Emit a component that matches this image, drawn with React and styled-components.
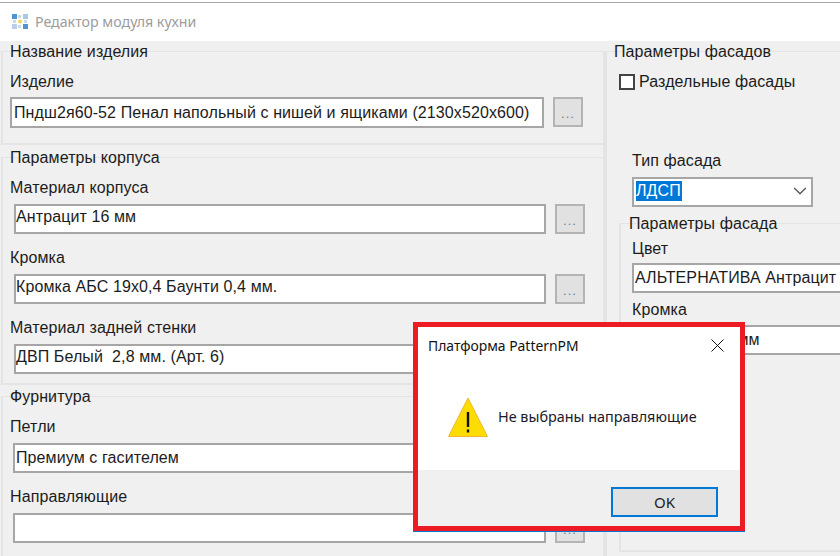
import React from 'react';
import styled, { createGlobalStyle } from 'styled-components';
import { ChevronDown } from 'lucide-react';

const GlobalStyle = createGlobalStyle`
  html, body {
    margin: 0;
    padding: 0;
    width: 840px;
    height: 556px;
    overflow: hidden;
    background: #ffffff;
  }
`;

const Window = styled.div`
  position: relative;
  width: 840px;
  height: 556px;
  overflow: hidden;
  display: flex;
  flex-direction: column;
  font-family: "Liberation Sans", Arial, sans-serif;
  font-size: 16px;
  letter-spacing: 0.1px;
  color: #1c1c1c;
`;

const TitleBar = styled.div`
  flex: none;
  height: 36px;
  margin-top: 2px;
  border-top: 1px solid #a9a9a9;
  padding: 0 0 2px 12px;
  display: flex;
  align-items: center;
  gap: 7px;
  background: #ffffff;
`;

const TitleText = styled.span`
  font-family: "Noto Sans", "Open Sans", sans-serif;
  font-size: 14.2px;
  letter-spacing: 0;
  color: #9c9c9c;
`;

const Body = styled.div`
  flex: 1;
  display: flex;
  min-height: 0;
  background: #f0f0f0;
`;

const LeftColumn = styled.div`
  flex: none;
  width: 603px;
  padding: 10px 0 0 1px;
  box-sizing: border-box;
  display: flex;
  flex-direction: column;
`;

const Divider = styled.div`
  flex: none;
  width: 2px;
  background: #e4e4e4;
  margin-top: 10px;
`;

const RightColumn = styled.div`
  flex: 1;
  min-width: 0;
  padding-top: 10px;
  display: flex;
  flex-direction: column;
`;

const Group = styled.div`
  box-sizing: border-box;
  flex: none;
  height: ${props => props.$height}px;
  margin-bottom: ${props => props.$gap || 0}px;
  border: 2px solid #e4e4e4;
  border-width: 1px 0 2px 2px;
  border-bottom-width: ${props => (props.$open ? 0 : 2)}px;
`;

const Legend = styled.div`
  height: 18px;
  line-height: 18px;
  margin-top: -9px;
  margin-left: ${props => props.$left}px;
  white-space: nowrap;
`;

const Fields = styled.div`
  padding-top: 12px;
  padding-left: ${props => props.$left}px;
  display: flex;
  flex-direction: column;
  gap: 15px;
`;

const Field = styled.div`
  display: flex;
  flex-direction: column;
  gap: ${props => props.$gap || 7}px;
`;

const Label = styled.div`
  height: 18px;
  line-height: 18px;
  white-space: nowrap;
`;

const Row = styled.div`
  display: flex;
  gap: 9px;
  padding-left: ${props => props.$indent || 0}px;
`;

const TextBox = styled.div`
  box-sizing: border-box;
  flex: none;
  width: ${props => props.$width}px;
  height: ${props => props.$height || 30}px;
  border: 2px solid #a6a6a6;
  background: #ffffff;
  padding-left: ${props => props.$pad ?? 1}px;
  line-height: ${props => props.$line || 25}px;
  white-space: nowrap;
  overflow: hidden;
`;

const DotsButton = styled.div`
  box-sizing: border-box;
  flex: none;
  width: 30px;
  height: 30px;
  border: 2px solid #b4b4b4;
  background: #e1e1e1;
  color: #7a7a7a;
  font-size: 13px;
  letter-spacing: 1px;
  text-align: center;
  line-height: 30px;
`;

const CheckRow = styled.div`
  display: flex;
  align-items: center;
  gap: 4px;
  margin: 12px 0 0 12px;
  height: 18px;
`;

const CheckBox = styled.div`
  box-sizing: border-box;
  width: 16px;
  height: 16px;
  border: 2px solid #444444;
  background: #ffffff;
`;

const TypeField = styled(Field)`
  margin: 61px 0 0 25px;
`;

const SelectBox = styled.div`
  box-sizing: border-box;
  width: 181px;
  height: 30px;
  padding: 0 0 2px 2px;
  border: 2px solid #a6a6a6;
  background: #ffffff;
  display: flex;
  align-items: center;
  justify-content: space-between;
`;

const SelectedText = styled.span`
  background: #0078d7;
  color: #ffffff;
  height: 20px;
  line-height: 20px;
  padding-right: 1px;
`;

const InnerGroup = styled.div`
  box-sizing: border-box;
  margin: 16px 0 0 12px;
  height: 329px;
  border: 2px solid #e4e4e4;
  border-width: 1px 0 2px 2px;
`;

const InnerField = styled(Field)`
  padding: ${props => props.$top}px 0 0 11px;
`;

const Dialog = styled.div`
  position: absolute;
  left: 413px;
  top: 322px;
  width: 332px;
  height: 209px;
  box-sizing: border-box;
  border: 5px solid #ed1c24;
  box-shadow: 0 1px 0 #0078d7;
  background: #ffffff;
  display: flex;
  flex-direction: column;
  font-family: "Noto Sans", "Open Sans", sans-serif;
  letter-spacing: 0;
  color: #111111;
`;

const DialogHeader = styled.div`
  flex: none;
  height: 36px;
  padding: 0 16px 0 10px;
  display: flex;
  align-items: center;
  justify-content: space-between;
  font-size: 13.9px;
`;

const DialogContent = styled.div`
  flex: 1;
  padding-left: 30px;
  display: flex;
  align-items: center;
  gap: 10px;
  font-size: 14.4px;
  color: #1a1a2a;
`;

const DialogFooter = styled.div`
  flex: none;
  height: 56px;
  box-sizing: border-box;
  padding: 17px 22px 0 0;
  background: #f0f0f0;
  display: flex;
  justify-content: flex-end;
  align-items: flex-start;
`;

const OkButton = styled.div`
  box-sizing: border-box;
  width: 107px;
  height: 30px;
  border: 2px solid #0078d7;
  background: #e1e1e1;
  color: #222222;
  font-size: 15px;
  text-align: center;
  line-height: 26px;
`;

const AppIcon = () => (
  <svg width="16" height="16" viewBox="0 0 16 16">
    <rect x="0" y="1" width="5" height="5" fill="#4f93cf" />
    <rect x="11" y="1" width="5" height="5" fill="#a9c8e4" />
    <rect x="0" y="11" width="5" height="5" fill="#b5d0e8" />
    <rect x="11" y="11" width="5" height="5" fill="#4f93cf" />
    <rect x="6" y="2" width="3" height="3" fill="#c9d9e6" />
    <rect x="1" y="7" width="3" height="3" fill="#c9d9e6" />
    <rect x="12" y="7" width="3" height="3" fill="#c9d9e6" />
    <rect x="6" y="12" width="3" height="3" fill="#c9d9e6" />
    <circle cx="8" cy="8.5" r="2" fill="#f2d64b" />
  </svg>
);

const WarningIcon = () => (
  <svg width="40" height="40" viewBox="0 0 40 40">
    <path d="M20 1 L39.5 39.5 L0.5 39.5 Z" fill="#fddc00" stroke="#f2b632" strokeWidth="1" strokeLinejoin="round" />
    <rect x="18.8" y="15" width="2.4" height="15" fill="#111111" />
    <rect x="18.8" y="32.5" width="2.4" height="3" fill="#111111" />
  </svg>
);

const CloseIcon = () => (
  <svg width="13" height="13" viewBox="0 0 13 13">
    <path d="M0.5 0.5 L12.5 12.5 M12.5 0.5 L0.5 12.5" stroke="#111111" strokeWidth="1" fill="none" />
  </svg>
);

const App = () => (
  <Window>
    <GlobalStyle />
    <TitleBar>
      <AppIcon />
      <TitleText>Редактор модуля кухни</TitleText>
    </TitleBar>
    <Body>
      <LeftColumn>
        <Group $height={94} $gap={12}>
          <Legend $left={7}>Название изделия</Legend>
          <Fields $left={7}>
            <Field $gap={6}>
              <Label>Изделие</Label>
              <Row>
                <TextBox $width={534} $height={31} $line={27} $pad={2}>
                  Пндш2я60-52 Пенал напольный с нишей и ящиками (2130x520x600)
                </TextBox>
                <DotsButton>...</DotsButton>
              </Row>
            </Field>
          </Fields>
        </Group>
        <Group $height={228} $gap={11}>
          <Legend $left={7}>Параметры корпуса</Legend>
          <Fields $left={7}>
            <Field>
              <Label>Материал корпуса</Label>
              <Row $indent={4}>
                <TextBox $width={532} $pad={0} $line={22}>Антрацит 16 мм</TextBox>
                <DotsButton>...</DotsButton>
              </Row>
            </Field>
            <Field>
              <Label>Кромка</Label>
              <Row $indent={4}>
                <TextBox $width={532} $pad={0} $line={22}>Кромка АБС 19х0,4 Баунти 0,4 мм.</TextBox>
                <DotsButton>...</DotsButton>
              </Row>
            </Field>
            <Field>
              <Label>Материал задней стенки</Label>
              <Row $indent={4}>
                <TextBox $width={532} $pad={0} $line={22}>ДВП Белый{'\u00a0'} 2,8 мм. (Арт. 6)</TextBox>
                <DotsButton>...</DotsButton>
              </Row>
            </Field>
          </Fields>
        </Group>
        <Group $height={170} $open>
          <Legend $left={7}>Фурнитура</Legend>
          <Fields $left={7}>
            <Field>
              <Label>Петли</Label>
              <Row $indent={3}>
                <TextBox $width={533}>Премиум с гасителем</TextBox>
                <DotsButton>...</DotsButton>
              </Row>
            </Field>
            <Field>
              <Label>Направляющие</Label>
              <Row $indent={3}>
                <TextBox $width={533} />
                <DotsButton>...</DotsButton>
              </Row>
            </Field>
          </Fields>
        </Group>
      </LeftColumn>
      <Divider />
      <RightColumn>
        <Group $height={505} $open>
          <Legend $left={7}>Параметры фасадов</Legend>
          <CheckRow>
            <CheckBox />
            <span>Раздельные фасады</span>
          </CheckRow>
          <TypeField>
            <Label>Тип фасада</Label>
            <SelectBox>
              <SelectedText>ЛДСП</SelectedText>
              <ChevronDown size={22} color="#555" strokeWidth={1.4} />
            </SelectBox>
          </TypeField>
          <InnerGroup>
            <Legend $left={8}>Параметры фасада</Legend>
            <InnerField $top={7} $gap={5}>
              <Label>Цвет</Label>
              <TextBox $width={230} $pad={1} $line={25}>АЛЬТЕРНАТИВА Антрацит</TextBox>
            </InnerField>
            <InnerField $top={8} $gap={6}>
              <Label>Кромка</Label>
              <TextBox $width={230} $pad={1} $line={25}>Антрацит 0,4 мм</TextBox>
            </InnerField>
          </InnerGroup>
        </Group>
      </RightColumn>
    </Body>
    <Dialog>
      <DialogHeader>
        <span>Платформа PatternPM</span>
        <CloseIcon />
      </DialogHeader>
      <DialogContent>
        <WarningIcon />
        <span>Не выбраны направляющие</span>
      </DialogContent>
      <DialogFooter>
        <OkButton>OK</OkButton>
      </DialogFooter>
    </Dialog>
  </Window>
);

export default App;
